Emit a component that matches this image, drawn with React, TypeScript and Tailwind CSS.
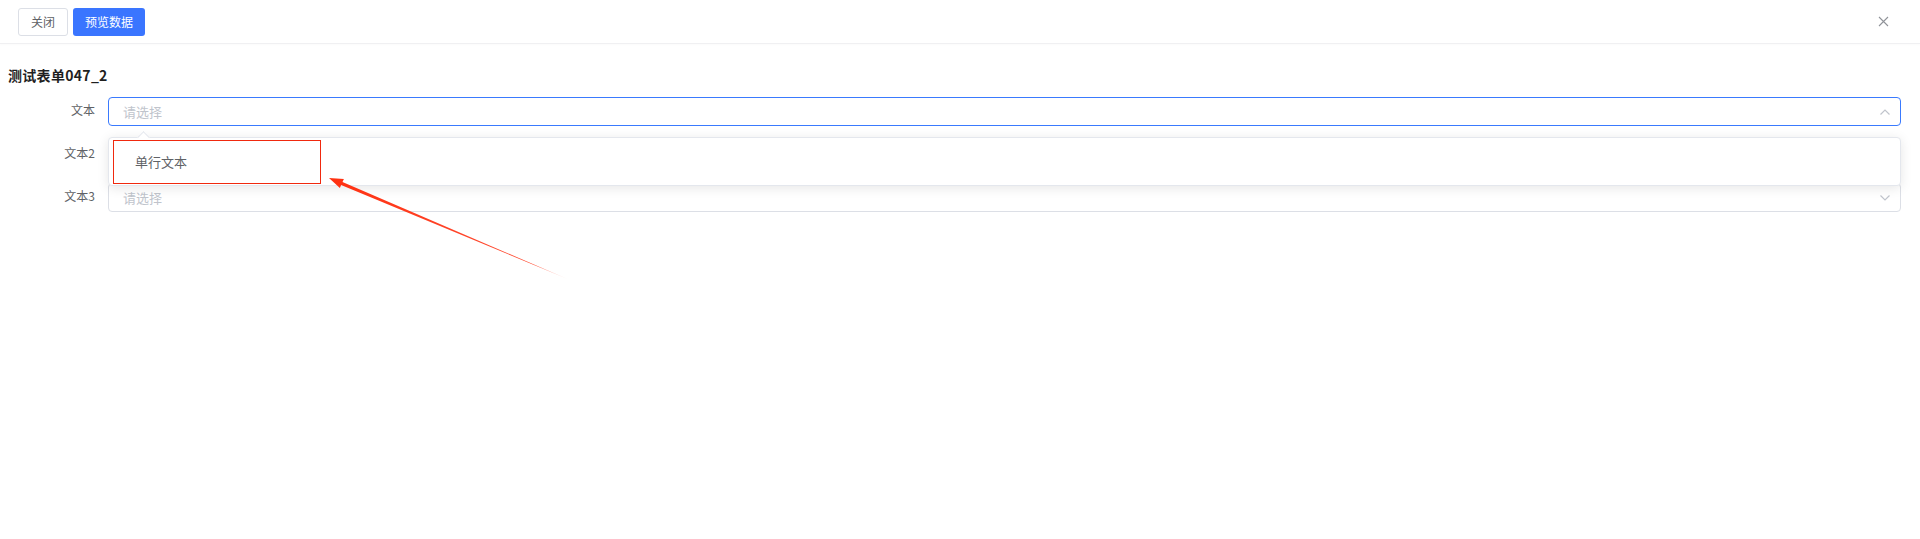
import React from "react";

const font = { fontFamily: '"Noto Sans CJK SC", "Noto Sans", sans-serif' };

function Chevron({ up }: { up?: boolean }) {
  return (
    <svg width="12" height="8" viewBox="0 0 12 8" className="shrink-0">
      {up ? (
        <path d="M1.5 6.5 L6 2 L10.5 6.5" fill="none" stroke="#c0c4cc" strokeWidth="1.2" />
      ) : (
        <path d="M1.5 1.5 L6 6 L10.5 1.5" fill="none" stroke="#c0c4cc" strokeWidth="1.2" />
      )}
    </svg>
  );
}

function Row({ label, focused, up }: { label: string; focused?: boolean; up?: boolean }) {
  return (
    <div className="flex items-center h-[29px]">
      <div className="w-[100px] pr-[13px] pb-[3px] text-right text-[12px] text-[#606266] leading-none">{label}</div>
      <div
        className={`flex-1 h-[29px] rounded-[4px] border flex items-center pl-[14px] pr-[9px] ${
          focused ? "border-[#3a7afe]" : "border-[#dcdfe6]"
        }`}
      >
        <span className="flex-1 text-[13px] text-[#c0c4cc] leading-none pb-[1px]">请选择</span>
        <Chevron up={up} />
      </div>
    </div>
  );
}

export default function App() {
  return (
    <div className="relative w-[1920px] h-[539px] bg-white overflow-hidden" style={font}>
      <div className="h-[44px] border-b border-[#f0f0f2] shadow-[0_1px_2px_rgba(0,0,0,0.02)] flex items-center pl-[18px] pr-[31px]">
        <button className="h-[28px] w-[50px] rounded-[3px] border border-[#dcdfe6] bg-white text-[12px] text-[#606266] leading-none">
          关闭
        </button>
        <button className="ml-[5px] h-[28px] w-[72px] rounded-[3px] bg-[#3a75ff] text-[12px] text-white leading-none">
          预览数据
        </button>
        <div className="flex-1" />
        <svg width="11" height="11" viewBox="0 0 11 11">
          <path d="M1 1 L10 10 M10 1 L1 10" stroke="#909399" strokeWidth="1.1" />
        </svg>
      </div>

      <div className="pl-[8px] pr-[19px] pt-[21px]">
        <div className="text-[14px] font-bold text-[#1f1f1f] leading-[20px] tracking-[0.3px]">测试表单047_2</div>
        <div className="mt-[12px] flex flex-col gap-[14px]">
          <Row label="文本" focused up />
          <Row label="文本2" />
          <Row label="文本3" />
        </div>
      </div>

      {/* dropdown */}
      <div className="absolute left-[108px] top-[137px] w-[1793px] h-[49px] bg-white border border-[#e4e7ed] rounded-[4px] shadow-[0_2px_12px_rgba(0,0,0,0.1)]">
        <div className="absolute left-[30px] top-[-5px] w-[9px] h-[9px] bg-white border-l border-t border-[#e4e7ed] rotate-45" />
        <div className="relative h-full flex items-center pl-[26px] text-[13px] text-[#606266] leading-none">
          单行文本
        </div>
        <div className="absolute left-[4px] top-[2px] w-[208px] h-[44px] border-[1.5px] border-[#f0290e]" />
      </div>

      {/* annotation arrow */}
      <svg className="absolute left-0 top-0 pointer-events-none" width="1920" height="539">
        <defs>
          <linearGradient id="ag" gradientUnits="userSpaceOnUse" x1="570" y1="280" x2="329" y2="178">
            <stop offset="0" stopColor="#ff3b1f" stopOpacity="0" />
            <stop offset="0.15" stopColor="#ff3b1f" stopOpacity="0.9" />
            <stop offset="1" stopColor="#ff3010" stopOpacity="1" />
          </linearGradient>
        </defs>
        <polygon
          points="570,280 342.5,181.9 343.9,178.9 329,178 339.9,188.1 341.1,185.1"
          fill="url(#ag)"
        />
      </svg>
    </div>
  );
}
